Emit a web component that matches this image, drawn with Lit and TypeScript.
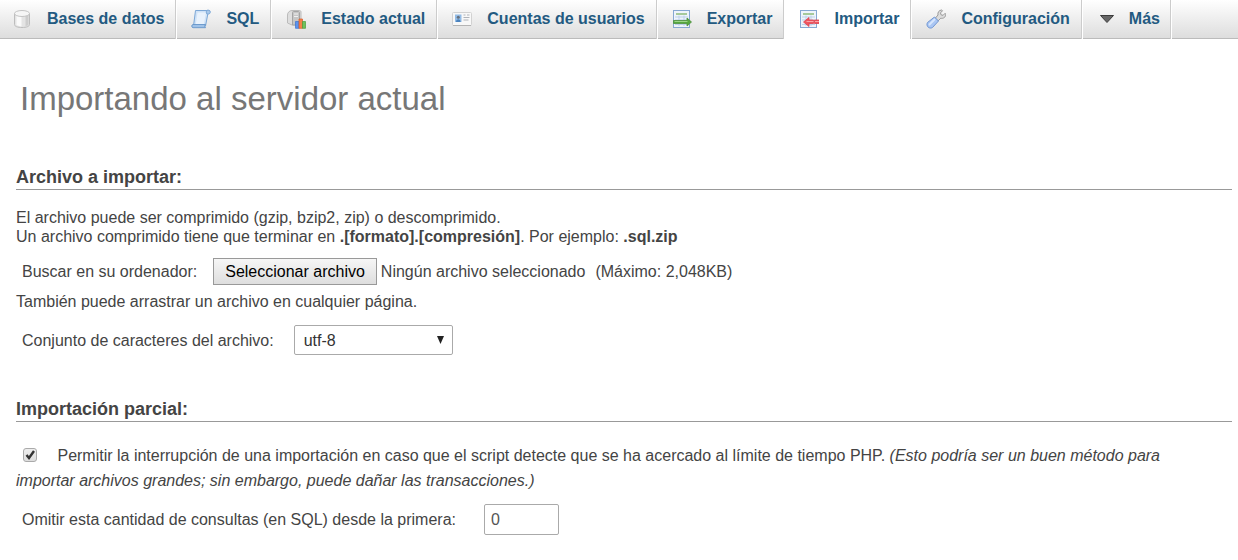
import { LitElement, html, css, svg } from "lit";
import { customElement, state } from "lit/decorators.js";

const databaseIcon = svg`
  <path d="M2.500 4.500v11c0 2 3.300 3 7.500 3s7.500-1 7.500-3v-11z" fill="#e4e4e4" stroke="#bdbdbd"/>
  <path d="M4.500 6v10c1 .7 2.800 1.200 5 1.300V7z" fill="#fafafa"/>
  <path d="M13.500 7v10c1.700-.3 3-.8 3-1.500V6z" fill="#cdcdcd"/>
  <ellipse cx="10" cy="4.500" rx="7.500" ry="3" fill="#f6f6f6" stroke="#c4c4c4"/>`;

const sqlIcon = svg`
  <path d="M4.500 1.500h13L14.500 17H2.500z" fill="#cfe2f7" stroke="#7ba7d6"/>
  <path d="M6.500 3.500h8.500L12.800 15.500H4.800z" fill="#e9f2fc"/>
  <path d="M16 1.200h2c1.900.3 1.700 3.600-.2 3.800h-1.900c-.9-1.200-.8-2.900.1-3.800z" fill="#a9c8ea" stroke="#7ba7d6" stroke-width=".9"/>
  <path d="M2 15.500h12.500c-.9 1-.9 2.200 0 3.200H2c-1.700-.3-1.700-2.900 0-3.200z" fill="#9fc2e8" stroke="#6494c8" stroke-width=".9"/>`;

const statusIcon = svg`
  <path d="M6 1.500h7.500c.8 0 1.500.5 1.500 1.500v13H6l-4.500-2V6c0-2.500 2-4.500 4.500-4.500z" fill="#dedede" stroke="#bbb"/>
  <path d="M6.500 3.500c0-.6.400-1 1-1h5c.6 0 1 .4 1 1V16h-7z" fill="#c6c6c6" stroke="#a4a4a4"/>
  <path d="M8 5h4M8 7.500h4" stroke="#f0f0f0" stroke-width="1.200"/>
  <path d="M9.500 12.500H13v6.800H9.500z" fill="#5b93ee" stroke="#3b72d0" stroke-width=".7"/>
  <path d="M13 10h3.500v9.300H13z" fill="#f4824a" stroke="#d95c28" stroke-width=".7"/>
  <path d="M16.500 12.500h3v6.800h-3z" fill="#6fc25c" stroke="#4a9c3c" stroke-width=".7"/>`;

const usersIcon = svg`
  <rect x=".5" y="3.500" width="19" height="13" rx="1" fill="#f8f8f8" stroke="#d2d2d2"/>
  <path d="M1 16.500h18" stroke="#b4b4b4"/>
  <rect x="3" y="5.500" width="6.500" height="7.500" fill="#93bce6"/>
  <circle cx="6.300" cy="8.200" r="1.500" fill="#66707c"/>
  <path d="M4 13c0-3.600 4.600-3.600 4.600 0z" fill="#4a82bd"/>
  <path d="M11.500 6h2M15 6h2.500M11.500 8.500h6M11.500 11h5" stroke="#b0b4ba"/>`;

const sheet = svg`
  <rect x="1.500" y="1.500" width="16" height="17" fill="#eef4fb" stroke="#86a8d2"/>
  <path d="M4 5h11" stroke="#8dbb7a" stroke-width="1.500"/>
  <path d="M3 8h13M3 11h13M3 15.500h13M7 6.500V17M12 6.500V17" stroke="#bdd1e9"/>`;

const exportIcon = svg`${sheet}
  <path d="M1.500 11.500H15V9l4.500 4-4.500 4v-2.500H1.500z" fill="#55a83f" stroke="#4d8f3e" stroke-width=".8"/>
  <path d="M2.500 12.500h13" stroke="#9bd587"/>`;

const importIcon = svg`${sheet}
  <path d="M20 11h-4.500v3.500H20zM14.500 11H10V8.500L4.500 13l5.500 4.500v-3h4.500z" fill="#ee5560" stroke="#dd4450" stroke-width=".8"/>
  <path d="M7.500 12.500h7M16 12.500h4" stroke="#f9a3a8"/>`;

const settingsIcon = svg`
  <path d="M9 9.500 12 6c-.6-2.600 1-4.800 3.700-5l.8.700-2 2.200.6 2 2 .4 2-2 .7.8c.2 3-2.600 4.800-5 4.100L12 12z" fill="#dcdcdc" stroke="#999"/>
  <path d="M8.500 8 12.500 12 6.500 18.500c-3 2-7-1.400-5-5z" fill="#aac6f3" stroke="#7197d3"/>
  <path d="M8.500 10.500 3.500 15.500" stroke="#d7e6fd" stroke-width="1.800" stroke-linecap="round"/>`;

const moreIcon = svg`
  <path d="M3.500 6.500h13L10 13.500z" fill="#666" stroke="#3c3c3c"/>`;

const tabs = [
  { label: "Bases de datos", icon: databaseIcon },
  { label: "SQL", icon: sqlIcon },
  { label: "Estado actual", icon: statusIcon },
  { label: "Cuentas de usuarios", icon: usersIcon },
  { label: "Exportar", icon: exportIcon },
  { label: "Importar", icon: importIcon, active: true },
  { label: "Configuración", icon: settingsIcon },
  { label: "Más", icon: moreIcon },
];

@customElement("app-root")
export class AppRoot extends LitElement {
  @state() private fileName = "Ningún archivo seleccionado";

  static styles = css`
    :host {
      display: block;
      background: #fff;
      color: #444;
      font: 16px/19px "Liberation Sans", Arial, sans-serif;
    }
    .tabs {
      display: flex;
      height: 39px;
      box-sizing: border-box;
      background: linear-gradient(#fff, #dcdcdc);
      box-shadow: inset 0 -1px #bbb;
      overflow: hidden;
    }
    .tab {
      display: flex;
      flex: none;
      align-items: center;
      gap: 15px;
      padding: 0 11px 2px 14px;
      border-left: 1px solid #fff;
      border-right: 1px solid #ccc;
      color: #235a81;
      font-weight: bold;
      text-decoration: none;
    }
    .tab:first-child {
      padding-left: 12px;
      border-left: 0;
    }
    .tab:last-child {
      gap: 12px;
      padding: 0 10px 2px 14px;
      box-shadow: 1px 0 #fff;
    }
    .tab.active {
      background: #fff;
    }
    .icon {
      display: block;
      width: 20px;
      height: 20px;
    }
    main {
      padding: 0 6px 24px 16px;
    }
    h1 {
      margin: 0;
      padding: 40px 4px 0;
      color: #777;
      font-size: 33px;
      font-weight: normal;
      line-height: 40px;
    }
    section {
      padding-top: 48px;
    }
    h2 {
      margin: 0 0 18px;
      padding-bottom: 2px;
      border-bottom: 1px solid #999;
      font-size: 18px;
      line-height: 20px;
    }
    p {
      margin: 0;
    }
    .row {
      display: flex;
      align-items: center;
      padding-left: 6px;
    }
    .file-row {
      padding-top: 12px;
      padding-bottom: 7px;
      gap: 4px;
    }
    .file-row label {
      margin-right: 12px;
    }
    .file-button {
      height: 27px;
      padding: 0 11px;
      border: 1px solid #999;
      border-radius: 0;
      background: linear-gradient(#f6f6f6, #dedede);
      color: #000;
      font: inherit;
    }
    .limit {
      margin-left: 6px;
    }
    .charset-row {
      gap: 20px;
      padding-top: 14px;
    }
    .select {
      display: grid;
      align-items: center;
    }
    .select > * {
      grid-area: 1 / 1;
    }
    select {
      appearance: none;
      width: 159px;
      height: 30px;
      padding: 0 24px 0 9px;
      border: 1px solid #aaa;
      border-radius: 2px;
      background: #fff;
      color: #333;
      font: inherit;
    }
    .arrow {
      justify-self: end;
      width: 7px;
      height: 8px;
      margin-right: 9px;
      pointer-events: none;
    }
    .partial {
      padding-top: 44px;
    }
    .interrupt {
      padding: 3px 40px 0 0;
      line-height: 25px;
    }
    .checkbox {
      appearance: none;
      width: 14px;
      height: 14px;
      margin: 0 16px 0 7px;
      border: 1px solid #aaa;
      border-radius: 3px;
      background: linear-gradient(#eee, #ddd);
      vertical-align: -1px;
    }
    .checkbox:checked {
      background: url("data:image/svg+xml,%3Csvg xmlns='http://www.w3.org/2000/svg' viewBox='0 0 12 12'%3E%3Cpath d='M2.500 6l2.500 3 5-7' fill='none' stroke='%23333' stroke-width='2.400'/%3E%3C/svg%3E"),
        linear-gradient(#eee, #ddd);
    }
    .skip-row {
      gap: 28px;
      padding-top: 11px;
    }
    .skip {
      box-sizing: border-box;
      width: 75px;
      height: 31px;
      padding: 0 6px;
      border: 1px solid #aaa;
      border-radius: 2px;
      background: #fff;
      color: #555;
      font: inherit;
    }
  `;

  private pickFile() {
    this.renderRoot.querySelector<HTMLInputElement>("#file")?.click();
  }

  private onFile(event: Event) {
    const file = (event.target as HTMLInputElement).files?.[0];
    this.fileName = file?.name ?? "Ningún archivo seleccionado";
  }

  render() {
    return html`
      <nav class="tabs">
        ${tabs.map(
          (tab) => html`<a class="tab ${tab.active ? "active" : ""}" href="#">
            <svg class="icon" viewBox="0 0 20 20" aria-hidden="true">${tab.icon}</svg>
            <span>${tab.label}</span>
          </a>`
        )}
      </nav>
      <main>
        <h1>Importando al servidor actual</h1>

        <section>
          <h2>Archivo a importar:</h2>
          <p>El archivo puede ser comprimido (gzip, bzip2, zip) o descomprimido.</p>
          <p>
            Un archivo comprimido tiene que terminar en
            <b>.[formato].[compresión]</b>. Por ejemplo: <b>.sql.zip</b>
          </p>
          <div class="row file-row">
            <label for="pick">Buscar en su ordenador:</label>
            <button id="pick" class="file-button" type="button" @click=${this.pickFile}>Seleccionar archivo</button>
            <input id="file" type="file" hidden @change=${this.onFile} />
            <span>${this.fileName}</span>
            <span class="limit">(Máximo: 2,048KB)</span>
          </div>
          <p>También puede arrastrar un archivo en cualquier página.</p>
          <div class="row charset-row">
            <label for="charset">Conjunto de caracteres del archivo:</label>
            <div class="select">
              <select id="charset">
                <option selected>utf-8</option>
                <option>iso-8859-1</option>
              </select>
              <svg class="arrow" viewBox="0 0 7 8" aria-hidden="true"><path d="M0 0h7L3.500 8z" fill="#222" /></svg>
            </div>
          </div>
        </section>

        <section class="partial">
          <h2>Importación parcial:</h2>
          <p class="interrupt">
            <input id="interrupt" class="checkbox" type="checkbox" checked />
            <label for="interrupt">Permitir la interrupción de una importación en caso que el script detecte
              que se ha acercado al límite de tiempo PHP.
              <i>(Esto podría ser un buen método para importar archivos grandes; sin embargo, puede dañar las
                transacciones.)</i></label>
          </p>
          <div class="row skip-row">
            <label for="skip">Omitir esta cantidad de consultas (en SQL) desde la primera:</label>
            <input id="skip" class="skip" type="text" inputmode="numeric" value="0" />
          </div>
        </section>
      </main>
    `;
  }
}
